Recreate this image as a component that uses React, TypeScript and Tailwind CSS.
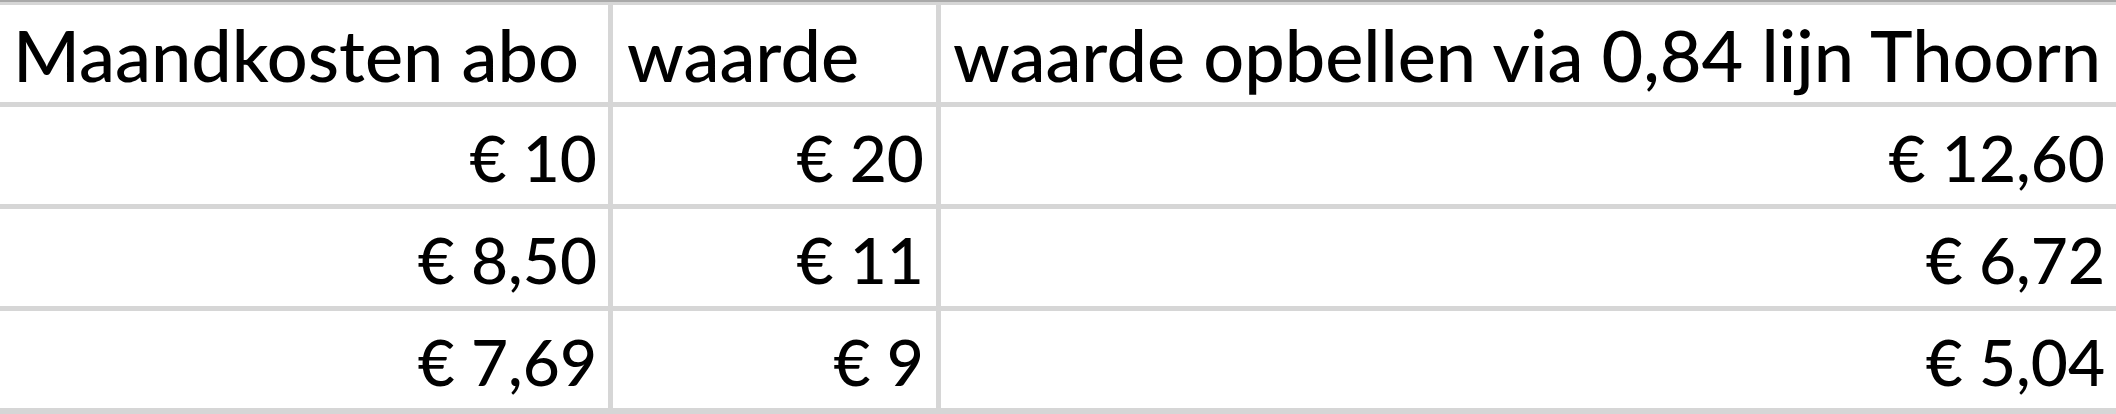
import React from "react";

const rows = [
  ["€ 10", "€ 20", "€ 12,60"],
  ["€ 8,50", "€ 11", "€ 6,72"],
  ["€ 7,69", "€ 9", "€ 5,04"],
];

export default function App() {
  const font = { fontFamily: "Lato, 'Open Sans', sans-serif" };
  const head = "bg-white flex items-end pb-[12px] text-[72px] font-medium leading-none text-black whitespace-nowrap";
  const num = "bg-white flex items-end justify-end pb-[14px] text-[64px] font-medium leading-none text-black whitespace-nowrap";
  return (
    <div className="w-[2116px] h-[414px] overflow-hidden bg-white" style={font}>
      <div className="h-[2px] bg-[#a9a9a9]" />
      <div className="h-[3px] bg-[#d6d6d6]" />
      <div className="grid grid-cols-[608px_323px_1185px] grid-rows-[97px_97px_97px_97px] gap-[5px] bg-[#d6d6d6] pb-[6px] w-[2126px]">
        <div className={`${head} pl-[13px]`}>Maandkosten abo</div>
        <div className={`${head} pl-[14px]`}>waarde</div>
        <div className={`${head} pl-[12px]`}>waarde opbellen via 0,84 lijn Thoorn</div>
        {rows.map((r, i) => (
          <React.Fragment key={i}>
            <div className={`${num} pr-[11px]`}>{r[0]}</div>
            <div className={`${num} pr-[12px]`}>{r[1]}</div>
            <div className={`${num} pr-[21px]`}>{r[2]}</div>
          </React.Fragment>
        ))}
      </div>
    </div>
  );
}
